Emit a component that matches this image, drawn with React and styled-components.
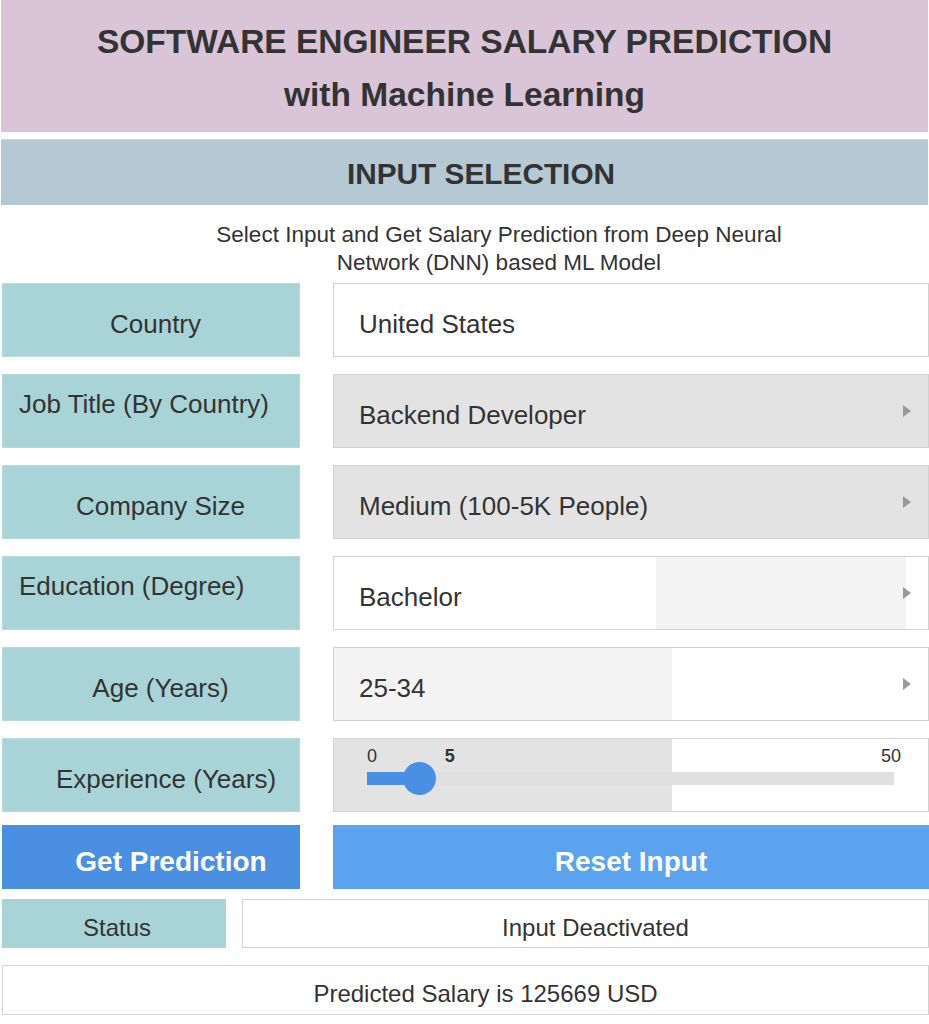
import styled, { createGlobalStyle } from "styled-components";

const GlobalStyle = createGlobalStyle`
  body { margin: 0; background: #fff; font-family: "Liberation Sans", Arial, sans-serif; color: #333; }
`;

const Page = styled.div`
  width: 929px;
  padding: 0 1px 0 1px;
  box-sizing: border-box;
`;

const Header = styled.header`
  height: 132px;
  background: #d9c4d8;
  display: flex;
  flex-direction: column;
  align-items: center;
  justify-content: center;
  padding-top: 4px;
  box-sizing: border-box;
  h1 {
    margin: 0;
    font-size: 33.5px;
    line-height: 53px;
    font-weight: bold;
    color: #333;
    text-align: center;
  }
`;

const SectionBar = styled.div`
  margin-top: 7px;
  height: 66px;
  background: #b4c9d3;
  border-top: 1px solid #c9dbe2;
  display: flex;
  align-items: center;
  justify-content: center;
  font-size: 29.8px;
  font-weight: bold;
  color: #333;
  padding: 3px 0 0 33px;
  box-sizing: border-box;
`;

const Subtitle = styled.p`
  margin: 0 0 0 200px;
  width: 596px;
  height: 78px;
  padding-top: 16px;
  box-sizing: border-box;
  text-align: center;
  font-size: 22.5px;
  line-height: 28px;
  color: #333;
`;

const Rows = styled.div`
  display: flex;
  flex-direction: column;
  gap: 17px;
  padding-left: 1px;
`;

const Row = styled.div`
  display: grid;
  grid-template-columns: 298px 596px;
  column-gap: 33px;
  height: 74px;
`;

const Label = styled.div`
  background: #a9d4d7;
  border: 1px solid #b6dadd;
  display: flex;
  align-items: ${(p) => (p.$top ? "flex-start" : "center")};
  justify-content: ${(p) => (p.$top ? "flex-start" : "center")};
  padding: ${(p) => (p.$top ? "14px 0 0 16px" : `7px 0 0 ${p.$indent || 0}px`)};
  box-sizing: border-box;
  font-size: 26px;
  line-height: 30px;
  color: #333;
  white-space: nowrap;
`;

const Field = styled.div`
  background: ${(p) => p.$bg || "#fff"};
  border: 1px solid #d2d2d2;
  box-sizing: border-box;
  display: flex;
  align-items: center;
  justify-content: space-between;
  padding: 8px 17px 0 25px;
  font-size: 26px;
  color: #333;
`;

const Arrow = styled.span`
  width: 0;
  height: 0;
  border-top: 6px solid transparent;
  border-bottom: 6px solid transparent;
  border-left: 8px solid #9a9a9a;
  margin-top: -8px;
`;

const SliderField = styled.div`
  background: linear-gradient(to right, #e3e3e3 0, #e3e3e3 338px, #fff 338px);
  border: 1px solid #d2d2d2;
  box-sizing: border-box;
  padding: 5px 34px 0 33px;
`;

const Scale = styled.div`
  position: relative;
  height: 22px;
  font-size: 18px;
  line-height: 22px;
  color: #333;
`;

const Tick = styled.span`
  position: absolute;
  top: 1px;
  font-weight: ${(p) => (p.$bold ? "bold" : "normal")};
`;

const Track = styled.div`
  position: relative;
  margin-top: 6px;
  height: 13px;
  background: #e0e0e0;
`;

const Fill = styled.div`
  height: 100%;
  background: #4a90e2;
`;

const Thumb = styled.div`
  position: absolute;
  top: 50%;
  width: 33px;
  height: 33px;
  margin: -16.5px 0 0 -16.5px;
  border-radius: 50%;
  background: #4a90e2;
`;

const ButtonRow = styled.div`
  display: grid;
  grid-template-columns: 298px 596px;
  column-gap: 33px;
  margin-top: 13px;
  padding-left: 1px;
  height: 64px;
`;

const Button = styled.button`
  border: 0;
  margin: 0;
  background: ${(p) => (p.$primary ? "#4a8fe1" : "#5ba3ef")};
  color: #fff;
  font-family: "Liberation Sans", Arial, sans-serif;
  font-size: 28px;
  font-weight: bold;
  padding: 10px 0 0 ${(p) => (p.$primary ? "40px" : "0")};
  cursor: pointer;
`;

const StatusRow = styled.div`
  display: grid;
  grid-template-columns: 224px 687px;
  column-gap: 16px;
  margin-top: 10px;
  padding-left: 1px;
  height: 49px;
`;

const StatusLabel = styled.div`
  background: #a9d4d7;
  display: flex;
  align-items: center;
  justify-content: center;
  font-size: 24px;
  padding: 8px 0 0 6px;
  box-sizing: border-box;
`;

const OutputBox = styled.div`
  background: #fff;
  border: 1px solid #d2d2d2;
  box-sizing: border-box;
  display: flex;
  align-items: center;
  justify-content: center;
  font-size: 24px;
  padding: 8px 0 0 ${(p) => p.$indent || 0}px;
  color: #333;
`;

const ResultBox = styled(OutputBox)`
  margin: 17px 0 0 1px;
  height: 50px;
  width: 927px;
`;

const rows = [
  { label: "Country", value: "United States", indent: 9, bg: "#fff", arrow: false },
  { label: "Job Title (By Country)", value: "Backend Developer", top: true, bg: "#e3e3e3" },
  { label: "Company Size", value: "Medium (100-5K People)", indent: 19, bg: "#e3e3e3" },
  {
    label: "Education (Degree)",
    value: "Bachelor",
    top: true,
    bg: "linear-gradient(to right, #fff 0, #fff 322px, #f3f3f3 322px, #f3f3f3 572px, #fff 572px)",
  },
  {
    label: "Age (Years)",
    value: "25-34",
    indent: 19,
    bg: "linear-gradient(to right, #f3f3f3 0, #f3f3f3 338px, #fff 338px)",
  },
];

function ExperienceSlider({ value, max }) {
  const pct = (value / max) * 100;
  return (
    <SliderField>
      <Scale>
        <Tick style={{ left: 0 }}>0</Tick>
        <Tick $bold style={{ left: `calc(${pct}% + 25px)` }}>{value}</Tick>
        <Tick style={{ right: -7 }}>{max}</Tick>
      </Scale>
      <Track>
        <Fill style={{ width: `${pct}%` }} />
        <Thumb style={{ left: `${pct}%` }} />
      </Track>
    </SliderField>
  );
}

export default function App() {
  return (
    <Page>
      <GlobalStyle />
      <Header>
        <h1>SOFTWARE ENGINEER SALARY PREDICTION</h1>
        <h1>with Machine Learning</h1>
      </Header>
      <SectionBar>INPUT SELECTION</SectionBar>
      <Subtitle>
        Select Input and Get Salary Prediction from Deep Neural Network (DNN) based ML Model
      </Subtitle>
      <Rows>
        {rows.map((r) => (
          <Row key={r.label}>
            <Label $top={r.top} $indent={r.indent}>{r.label}</Label>
            <Field $bg={r.bg}>
              <span>{r.value}</span>
              {r.arrow !== false && <Arrow />}
            </Field>
          </Row>
        ))}
        <Row>
          <Label $indent={30}>Experience (Years)</Label>
          <ExperienceSlider value={5} max={50} />
        </Row>
      </Rows>
      <ButtonRow>
        <Button $primary>Get Prediction</Button>
        <Button>Reset Input</Button>
      </ButtonRow>
      <StatusRow>
        <StatusLabel>Status</StatusLabel>
        <OutputBox $indent={20}>Input Deactivated</OutputBox>
      </StatusRow>
      <ResultBox $indent={40}>Predicted Salary is 125669 USD</ResultBox>
    </Page>
  );
}
